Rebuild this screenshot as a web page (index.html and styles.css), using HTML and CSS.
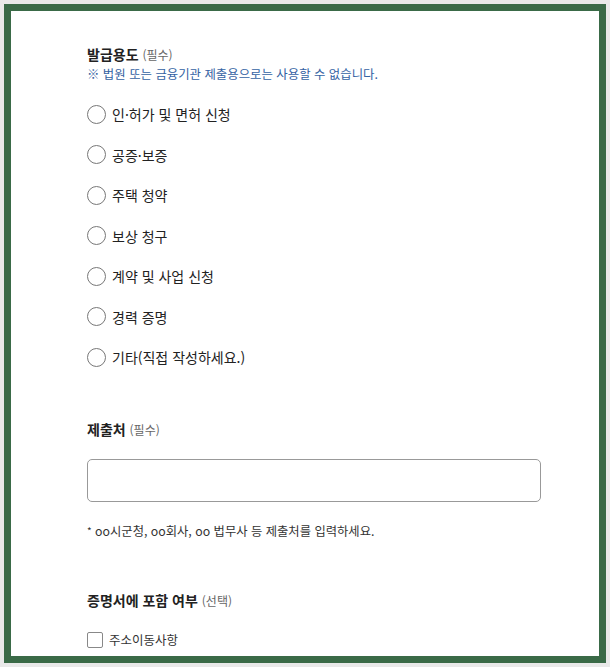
FILE: index.html
```html
<!DOCTYPE html>
<html lang="ko">
<head>
  <meta charset="UTF-8" />
  <meta name="viewport" content="width=device-width, initial-scale=1.0"/>
  <title>증명서 발급 신청</title>
  <link rel="stylesheet" href="styles.css">
</head>
<body>

<div class="frame">
  <form class="apply-form">

    <div class="field field-purpose">
      <h2 class="field-title">발급용도 <span class="field-tag">(필수)</span></h2>
      <p class="field-note">※ 법원 또는 금융기관 제출용으로는 사용할 수 없습니다.</p>
      <div class="radio-list">
        <label class="radio-item"><input type="radio" name="purpose" /> 인·허가 및 면허 신청</label>
        <label class="radio-item"><input type="radio" name="purpose" /> 공증·보증</label>
        <label class="radio-item"><input type="radio" name="purpose" /> 주택 청약</label>
        <label class="radio-item"><input type="radio" name="purpose" /> 보상 청구</label>
        <label class="radio-item"><input type="radio" name="purpose" /> 계약 및 사업 신청</label>
        <label class="radio-item"><input type="radio" name="purpose" /> 경력 증명</label>
        <label class="radio-item"><input type="radio" name="purpose" /> 기타(직접 작성하세요.)</label>
      </div>
    </div>

    <div class="field field-target">
      <h2 class="field-title">제출처 <span class="field-tag">(필수)</span></h2>
      <input type="text" class="text-input" />
      <p class="field-hint"><span class="hint-mark">*</span> oo시군청, oo회사, oo 법무사 등 제출처를 입력하세요.</p>
    </div>

    <div class="field field-include">
      <h2 class="field-title">증명서에 포함 여부 <span class="field-tag">(선택)</span></h2>
      <label class="check-item"><input type="checkbox" /> 주소이동사항</label>
    </div>

  </form>
</div>

</body>
</html>
```

FILE: styles.css
```css
body {
  margin: 0;
  padding: 4px;
  background: #e9e9e9;
  font-family: "Noto Sans CJK KR", "Noto Sans", sans-serif;
  color: #222;
}
.frame {
  height: 645px;
  border: 7px solid #3a6a47;
  background: white;
  overflow: hidden;
}
.apply-form {
  padding: 33px 0 0 76px;
  width: 454px;
}
.field-title {
  margin: 0;
  font-size: 14px;
  line-height: 20px;
  font-weight: bold;
  color: #222;
}
.field-tag {
  font-size: 12px;
  font-weight: normal;
  color: #666;
}
.field-note {
  margin: 0;
  font-size: 12.4px;
  line-height: 18px;
  color: #3462a3;
}
.radio-list {
  margin-top: 11px;
}
.radio-item {
  display: flex;
  align-items: center;
  gap: 6px;
  height: 40.5px;
  font-size: 14px;
  color: #222;
}
.radio-item input {
  appearance: none;
  width: 19px;
  height: 19px;
  margin: 0;
  border: 1px solid #777;
  border-radius: 50%;
  background: white;
}
.field-target {
  margin-top: 41px;
}
.text-input {
  display: block;
  box-sizing: border-box;
  width: 454px;
  height: 43px;
  margin-top: 19px;
  border: 1px solid #999;
  border-radius: 5px;
}
.field-hint {
  margin: 20px 0 0;
  font-size: 12.3px;
  line-height: 18px;
  color: #333;
}
.hint-mark {
  font-size: 10px;
  vertical-align: 1px;
}
.field-include {
  margin-top: 50px;
}
.check-item {
  display: flex;
  align-items: center;
  gap: 6px;
  margin-top: 19px;
  height: 20px;
  font-size: 12.5px;
  color: #333;
}
.check-item input {
  appearance: none;
  width: 16px;
  height: 16px;
  margin: 0;
  border: 1px solid #888;
  border-radius: 2px;
}
```
